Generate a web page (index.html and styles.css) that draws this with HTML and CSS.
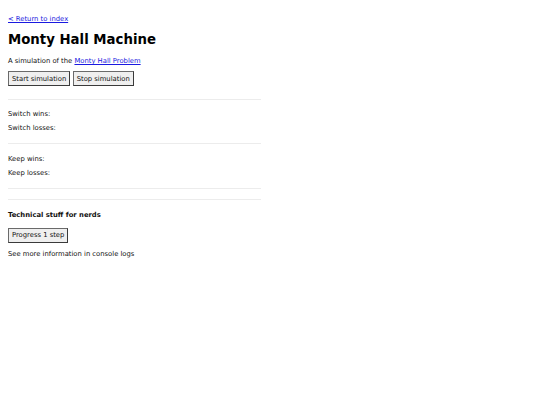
FILE: index.html
```html
<!DOCTYPE html>
<html>
<head>
<meta charset="utf-8">
<link rel="stylesheet" href="styles.css">
</head>
<body>
<main class="page">
  <a class="back" href="#">&lt; Return to index</a>
  <h1 class="title">Monty Hall Machine</h1>
  <p class="intro">A simulation of the <a href="#">Monty Hall Problem</a></p>
  <div class="controls">
    <button class="btn">Start simulation</button>
    <button class="btn">Stop simulation</button>
  </div>
  <hr class="rule rule-top">
  <section class="stats">
    <p class="stat">Switch wins:</p>
    <p class="stat">Switch losses:</p>
  </section>
  <hr class="rule">
  <section class="stats">
    <p class="stat">Keep wins:</p>
    <p class="stat">Keep losses:</p>
  </section>
  <hr class="rule">
  <hr class="rule rule-close">
  <h2 class="subtitle">Technical stuff for nerds</h2>
  <button class="btn btn-step">Progress 1 step</button>
  <p class="note">See more information in console logs</p>
</main>
</body>
</html>
```
FILE: styles.css
```css
html, body {
  margin: 0;
  padding: 0;
  background: #fff;
}
body {
  font-family: "DejaVu Sans", Verdana, sans-serif;
  font-size: 6.8px;
  line-height: 8px;
  color: #111;
}
.page {
  width: 253px;
  padding: 15px 8px 0 8px;
  display: flex;
  flex-direction: column;
  align-items: flex-start;
}
a {
  color: #1a1ae0;
}
.title {
  font-size: 13.3px;
  line-height: 16px;
  font-weight: bold;
  margin: 9px 0 0 0;
  color: #000;
}
.intro {
  margin: 9px 0 0 0;
}
.controls {
  display: flex;
  gap: 2.5px;
  margin-top: 6px;
}
.btn {
  font-family: "DejaVu Sans", Verdana, sans-serif;
  font-size: 6.8px;
  line-height: 8px;
  color: #111;
  background: #efefef;
  border: 1px solid #6a6a6a;
  border-right-color: #3a3a3a;
  border-bottom-color: #3a3a3a;
  padding: 2.5px 3px;
  margin: 0;
}
.rule {
  align-self: stretch;
  border: none;
  border-top: 1px solid #ececec;
  margin: 11px 0 0 0;
}
.rule-top {
  margin-top: 12.5px;
}
.rule-close {
  margin-top: 10px;
}
.stats {
  display: flex;
  flex-direction: column;
  gap: 6px;
  margin-top: 10.5px;
}
.stat {
  margin: 0;
}
.subtitle {
  font-size: 6.8px;
  line-height: 8px;
  font-weight: bold;
  margin: 11px 0 0 0;
}
.btn-step {
  margin-top: 9px;
}
.note {
  margin: 7.5px 0 0 0;
}
```
